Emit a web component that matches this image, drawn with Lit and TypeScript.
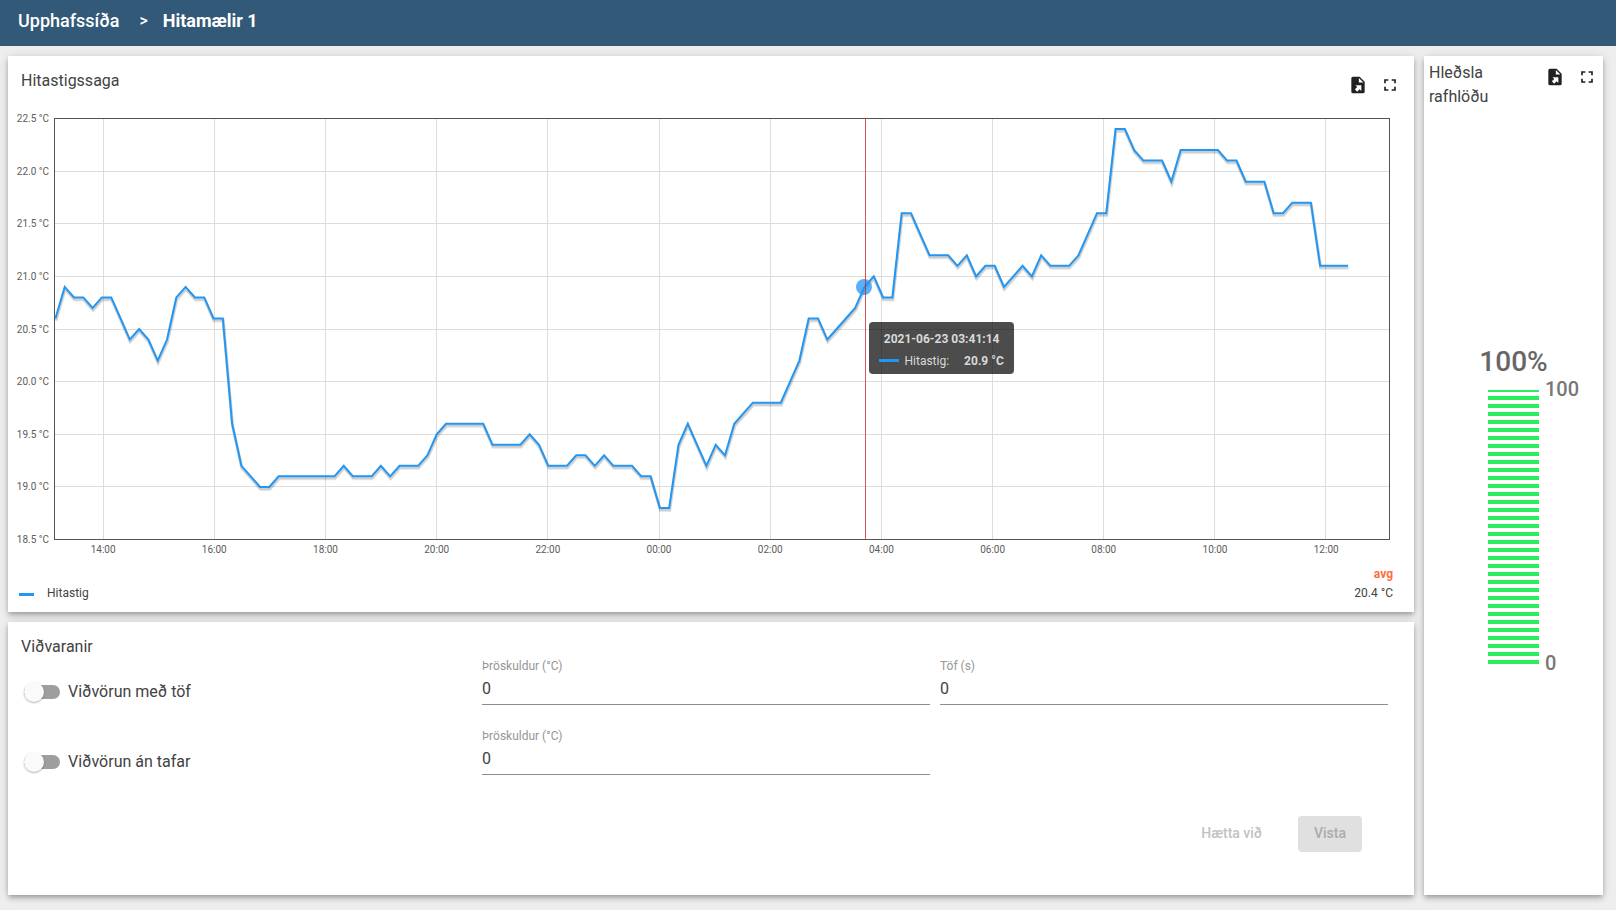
import { LitElement, html, svg, css } from "lit";
import { customElement, property } from "lit/decorators.js";

const readings = [
  20.6, 20.9, 20.8, 20.8, 20.7, 20.8, 20.8, 20.6, 20.4, 20.5, 20.4, 20.2, 20.4, 20.8, 20.9, 20.8, 20.8, 20.6, 20.6, 19.6,
  19.2, 19.1, 19.0, 19.0, 19.1, 19.1, 19.1, 19.1, 19.1, 19.1, 19.1, 19.2, 19.1, 19.1, 19.1, 19.2, 19.1, 19.2, 19.2, 19.2,
  19.3, 19.5, 19.6, 19.6, 19.6, 19.6, 19.6, 19.4, 19.4, 19.4, 19.4, 19.5, 19.4, 19.2, 19.2, 19.2, 19.3, 19.3, 19.2, 19.3,
  19.2, 19.2, 19.2, 19.1, 19.1, 18.8, 18.8, 19.4, 19.6, 19.4, 19.2, 19.4, 19.3, 19.6, 19.7, 19.8, 19.8, 19.8, 19.8, 20.0,
  20.2, 20.6, 20.6, 20.4, 20.5, 20.6, 20.7, 20.9, 21.0, 20.8, 20.8, 21.6, 21.6, 21.4, 21.2, 21.2, 21.2, 21.1, 21.2, 21.0,
  21.1, 21.1, 20.9, 21.0, 21.1, 21.0, 21.2, 21.1, 21.1, 21.1, 21.2, 21.4, 21.6, 21.6, 22.4, 22.4, 22.2, 22.1, 22.1, 22.1,
  21.9, 22.2, 22.2, 22.2, 22.2, 22.2, 22.1, 22.1, 21.9, 21.9, 21.9, 21.6, 21.6, 21.7, 21.7, 21.7, 21.1, 21.1, 21.1, 21.1,
];

// Chart window: a little over 24 hours across, 18.5 to 22.5 degrees upwards.
const W = 1336;
const H = 422;
const MAX = 22.5;
const MIN = 18.5;
const SPAN = 1442;
const FIRST_TICK = 53;
const TICK = 120;
const FIRST_READING = 1;
const STEP = 10.045;
const SELECTED = 87;
const CURSOR = 876;

const px = (minute: number) => 0.5 + (minute / SPAN) * (W - 1);
const py = (value: number) => 0.5 + ((MAX - value) / (MAX - MIN)) * (H - 1);
const minuteOf = (i: number) => FIRST_READING + i * STEP;

const hours = Array.from({ length: 12 }, (_, i) => (14 + i * 2) % 24);
const levels = Array.from({ length: 9 }, (_, i) => MAX - i * 0.5);

@customElement("card-actions")
export class CardActions extends LitElement {
  static styles = css`
    :host {
      display: flex;
      gap: 12px;
    }
    button {
      width: 20px;
      height: 20px;
      padding: 0;
      border: 0;
      background: none;
      color: #212121;
      cursor: pointer;
    }
    svg {
      display: block;
      width: 20px;
      height: 20px;
      fill: currentColor;
    }
  `;

  render() {
    return html`
      <button type="button" aria-label="Flytja út">
        <svg viewBox="0 0 24 24">
          <path
            d="M6 2C4.89 2 4 2.9 4 4V20A2 2 0 0 0 6 22H18A2 2 0 0 0 20 20V8L14 2M13 3.5L18.5 9H13M8.93 12.22H16V19.29L13.88 17.17L11.05 20L8.22 17.17L11.05 14.35"
          />
        </svg>
      </button>
      <button type="button" aria-label="Fylla skjá">
        <svg viewBox="0 0 24 24">
          <path
            d="M7 14H5v5h5v-2H7v-3zM5 10h2V7h3V5H5v5zm12 7h-3v2h5v-5h-2v3zM14 5v2h3v3h2V5h-5z"
          />
        </svg>
      </button>
    `;
  }
}

@customElement("temperature-chart")
export class TemperatureChart extends LitElement {
  static styles = css`
    :host {
      display: grid;
      grid-template-columns: 46px minmax(0, 1fr);
      grid-template-rows: minmax(0, 1fr) auto;
      padding-right: 24px;
      color: #5c5c5c;
      font-size: 10px;
      line-height: 12px;
    }
    .levels {
      display: flex;
      flex-direction: column;
      justify-content: space-between;
      margin: -5px 5px -6px 0;
      text-align: right;
      white-space: nowrap;
    }
    .plot {
      position: relative;
      min-height: 0;
    }
    .lines {
      position: absolute;
      inset: 0;
      width: 100%;
      height: 100%;
    }
    .lines * {
      fill: none;
      vector-effect: non-scaling-stroke;
    }
    .grid {
      stroke: #dddddd;
      shape-rendering: crispEdges;
    }
    .frame {
      stroke: #545454;
      shape-rendering: crispEdges;
    }
    .shade {
      stroke: rgba(0, 0, 0, 0.1);
      stroke-width: 3;
    }
    .series {
      stroke: #2196f3;
      stroke-width: 2;
    }
    .dot {
      position: absolute;
      width: 16px;
      height: 16px;
      margin: -8px 0 0 -8px;
      border-radius: 50%;
      background: rgba(33, 150, 243, 0.75);
    }
    .cursor {
      position: absolute;
      top: 0;
      bottom: 0;
      width: 1px;
      background: rgba(200, 30, 30, 0.75);
    }
    .tip {
      position: absolute;
      display: grid;
      gap: 8px;
      box-sizing: border-box;
      margin: 35px 0 0 4px;
      padding: 10px 10px 6px;
      border-radius: 4px;
      background: rgba(0, 0, 0, 0.7);
      color: #d9d9d9;
      font-size: 12px;
      line-height: 14px;
      white-space: nowrap;
    }
    .tip-date {
      font-weight: 700;
      text-align: center;
    }
    .tip-row {
      display: flex;
      align-items: center;
    }
    .tip-key {
      width: 20px;
      height: 3px;
      margin-right: 5px;
      background: #2196f3;
    }
    .tip-value {
      margin-left: 15px;
      font-weight: 700;
    }
    .hours {
      grid-column: 2;
      display: flex;
      padding-top: 4px;
    }
    .hours span {
      flex: 1;
      text-align: center;
    }
  `;

  render() {
    const line = (dx: number, dy: number) =>
      readings.map((v, i) => `${(px(minuteOf(i)) + dx).toFixed(2)},${(py(v) + dy).toFixed(2)}`).join(" ");
    const before = ((FIRST_TICK - TICK / 2) / SPAN) * 100;
    const after = 100 - before - ((12 * TICK) / SPAN) * 100;
    const x = (minute: number) => (px(minute) / W) * 100;
    const y = (py(readings[SELECTED]) / H) * 100;

    return html`
      <div class="levels">${levels.map((v) => html`<span>${v.toFixed(1)} °C</span>`)}</div>
      <div class="plot">
        <svg class="lines" viewBox="0 0 ${W} ${H}" preserveAspectRatio="none">
          ${hours.map((_, i) => {
            const gx = px(FIRST_TICK + i * TICK);
            return svg`<line class="grid" x1=${gx} x2=${gx} y1="0" y2=${H} />`;
          })}
          ${levels.slice(1, -1).map((v) => svg`<line class="grid" x1="0" x2=${W} y1=${py(v)} y2=${py(v)} />`)}
          <rect class="frame" x="0.5" y="0.5" width=${W - 1} height=${H - 1} />
          <polyline class="shade" points=${line(0.5, 2.5)} />
          <polyline class="shade" points=${line(0.3, 1.5)} />
          <polyline class="series" points=${line(0, 0)} />
        </svg>
        <div class="dot" style="left:${x(minuteOf(SELECTED))}%;top:${y}%"></div>
        <div class="cursor" style="left:${x(CURSOR)}%"></div>
        <div class="tip" style="left:${x(CURSOR)}%;top:${y}%">
          <div class="tip-date">2021-06-23 03:41:14</div>
          <div class="tip-row">
            <span class="tip-key"></span><span>Hitastig:</span><span class="tip-value">20.9 °C</span>
          </div>
        </div>
      </div>
      <div class="hours" style="margin-left:${before}%;margin-right:${after}%">
        ${hours.map((h) => html`<span>${String(h).padStart(2, "0")}:00</span>`)}
      </div>
    `;
  }
}

@customElement("battery-gauge")
export class BatteryGauge extends LitElement {
  @property({ type: Number }) value = 100;

  static styles = css`
    :host {
      display: grid;
      grid-template-columns: 1fr 51px 1fr;
      color: #666666;
      font-weight: 500;
    }
    .value {
      grid-column: 1 / -1;
      font-size: 28px;
      line-height: 32px;
      padding-bottom: 12px;
      text-align: center;
    }
    .bar {
      grid-column: 2;
      display: flex;
      align-items: flex-end;
      height: 274px;
    }
    .fill {
      width: 100%;
      background: repeating-linear-gradient(to top, #2bee5c 0 4px, #ffffff 4px 8px);
    }
    .scale {
      display: flex;
      flex-direction: column;
      justify-content: space-between;
      margin: -13px 0 -11px;
      padding-left: 6px;
      color: #777777;
      font-size: 20px;
      line-height: 24px;
    }
  `;

  render() {
    return html`
      <div class="value">${this.value}%</div>
      <div class="bar"><div class="fill" style="height:${this.value}%"></div></div>
      <div class="scale"><span>100</span><span>0</span></div>
    `;
  }
}

@customElement("alarm-form")
export class AlarmForm extends LitElement {
  static styles = css`
    :host {
      display: block;
    }
    form {
      display: grid;
      grid-template-columns: repeat(3, minmax(0, 1fr));
      gap: 24px 10px;
      padding: 0 26px 0 16px;
    }
    .toggle {
      grid-column: 1;
      display: flex;
      align-items: center;
      gap: 8px;
      padding-top: 19px;
      font-size: 16px;
      line-height: 24px;
    }
    .switch {
      appearance: none;
      display: flex;
      align-items: center;
      width: 36px;
      height: 14px;
      margin: 0;
      border-radius: 7px;
      background: #9e9e9e;
      cursor: pointer;
    }
    .switch::before {
      content: "";
      flex: none;
      width: 20px;
      height: 20px;
      border-radius: 50%;
      background: #fafafa;
      box-shadow: 0 1px 2px rgba(0, 0, 0, 0.3);
    }
    .switch:checked {
      justify-content: flex-end;
    }
    .field {
      display: flex;
      flex-direction: column;
    }
    .field label {
      color: #969696;
      font-size: 12px;
      line-height: 14px;
    }
    .field input {
      width: 100%;
      height: 32px;
      box-sizing: border-box;
      padding: 0 0 1px;
      border: 0;
      border-bottom: 1px solid #8c8c8c;
      border-radius: 0;
      outline: 0;
      background: none;
      color: inherit;
      font: inherit;
      font-size: 16px;
    }
    .buttons {
      grid-column: 1 / -1;
      display: flex;
      justify-content: flex-end;
      gap: 20px;
      padding: 17px 26px 0 0;
    }
    button {
      height: 36px;
      padding: 0 16px 2px;
      border: 0;
      border-radius: 4px;
      background: none;
      color: #c2c2c2;
      font: inherit;
      font-size: 14px;
      font-weight: 500;
    }
    .save {
      min-width: 64px;
      background: #e0e0e0;
      color: #ababab;
    }
  `;

  render() {
    return html`
      <form>
        <label class="toggle"><input class="switch" type="checkbox" role="switch" />Viðvörun með töf</label>
        <div class="field">
          <label for="limit-delayed">Þröskuldur (°C)</label>
          <input id="limit-delayed" type="text" inputmode="numeric" value="0" />
        </div>
        <div class="field">
          <label for="delay">Töf (s)</label>
          <input id="delay" type="text" inputmode="numeric" value="0" />
        </div>
        <label class="toggle"><input class="switch" type="checkbox" role="switch" />Viðvörun án tafar</label>
        <div class="field">
          <label for="limit-instant">Þröskuldur (°C)</label>
          <input id="limit-instant" type="text" inputmode="numeric" value="0" />
        </div>
        <div class="buttons">
          <button type="button" disabled>Hætta við</button>
          <button class="save" type="submit" disabled>Vista</button>
        </div>
      </form>
    `;
  }
}

@customElement("app-root")
export class AppRoot extends LitElement {
  static styles = css`
    :host {
      display: flex;
      flex-direction: column;
      min-height: 100vh;
      background: #eeeeee;
      color: #424242;
      font-family: Roboto, "Liberation Sans", sans-serif;
    }
    .bar {
      display: flex;
      align-items: center;
      gap: 15px;
      height: 42px;
      padding: 0 18px 4px;
      background: #325978;
      color: #ffffff;
      font-size: 18px;
      line-height: 24px;
    }
    .bar a {
      color: inherit;
      font-weight: 500;
      text-decoration: none;
    }
    .crumb {
      padding-left: 5px;
      font-size: 16px;
      font-weight: 500;
    }
    .bar strong {
      font-weight: 700;
    }
    .board {
      flex: 1;
      display: grid;
      grid-template-columns: minmax(0, 1406fr) minmax(0, 179fr);
      grid-template-rows: 556fr 273fr;
      gap: 10px;
      padding: 10px 13px 15px 8px;
    }
    .card {
      display: flex;
      flex-direction: column;
      background: #ffffff;
      box-shadow: 0 2px 4px -1px rgba(0, 0, 0, 0.2), 0 4px 5px 0 rgba(0, 0, 0, 0.14), 0 1px 10px 0 rgba(0, 0, 0, 0.12);
    }
    .battery {
      grid-column: 2;
      grid-row: 1 / 3;
    }
    .head {
      display: flex;
      justify-content: space-between;
      align-items: flex-start;
      box-sizing: border-box;
      height: 62px;
      padding: 13px 14px 0 13px;
    }
    .history card-actions {
      padding-top: 6px;
    }
    h2 {
      margin: 0;
      font-size: 16px;
      font-weight: 400;
      line-height: 24px;
    }
    .battery .head {
      padding: 5px 6px 0 5px;
    }
    .battery card-actions {
      padding-top: 6px;
    }
    .battery h2 {
      width: 80px;
    }
    .alarms h2 {
      padding: 13px 13px 0;
    }
    temperature-chart {
      flex: 1;
    }
    .legend {
      margin: 9px 21px 9px 11px;
      border-collapse: collapse;
      font-size: 12px;
      line-height: 19px;
    }
    .legend th,
    .legend td {
      padding: 0;
      font-weight: 400;
      text-align: left;
    }
    .legend .key {
      width: 28px;
    }
    .legend .key span {
      display: block;
      width: 15px;
      height: 3px;
      margin-top: 2px;
      background: #2196f3;
    }
    .legend .num {
      text-align: right;
    }
    .legend .avg {
      color: #ff6e40;
      font-weight: 700;
      text-align: right;
    }
    .gauge {
      flex: 1;
      padding-top: 228px;
    }
  `;

  render() {
    return html`
      <nav class="bar">
        <a href="#">Upphafssíða</a>
        <span class="crumb">&gt;</span>
        <strong>Hitamælir 1</strong>
      </nav>
      <main class="board">
        <section class="card history">
          <div class="head">
            <h2>Hitastigssaga</h2>
            <card-actions></card-actions>
          </div>
          <temperature-chart></temperature-chart>
          <table class="legend">
            <tr>
              <td class="key"></td>
              <td></td>
              <th class="avg" scope="col">avg</th>
            </tr>
            <tr>
              <td class="key"><span></span></td>
              <th scope="row">Hitastig</th>
              <td class="num">20.4 °C</td>
            </tr>
          </table>
        </section>
        <section class="card alarms">
          <h2>Viðvaranir</h2>
          <alarm-form></alarm-form>
        </section>
        <section class="card battery">
          <div class="head">
            <h2>Hleðsla rafhlöðu</h2>
            <card-actions></card-actions>
          </div>
          <div class="gauge"><battery-gauge></battery-gauge></div>
        </section>
      </main>
    `;
  }
}
